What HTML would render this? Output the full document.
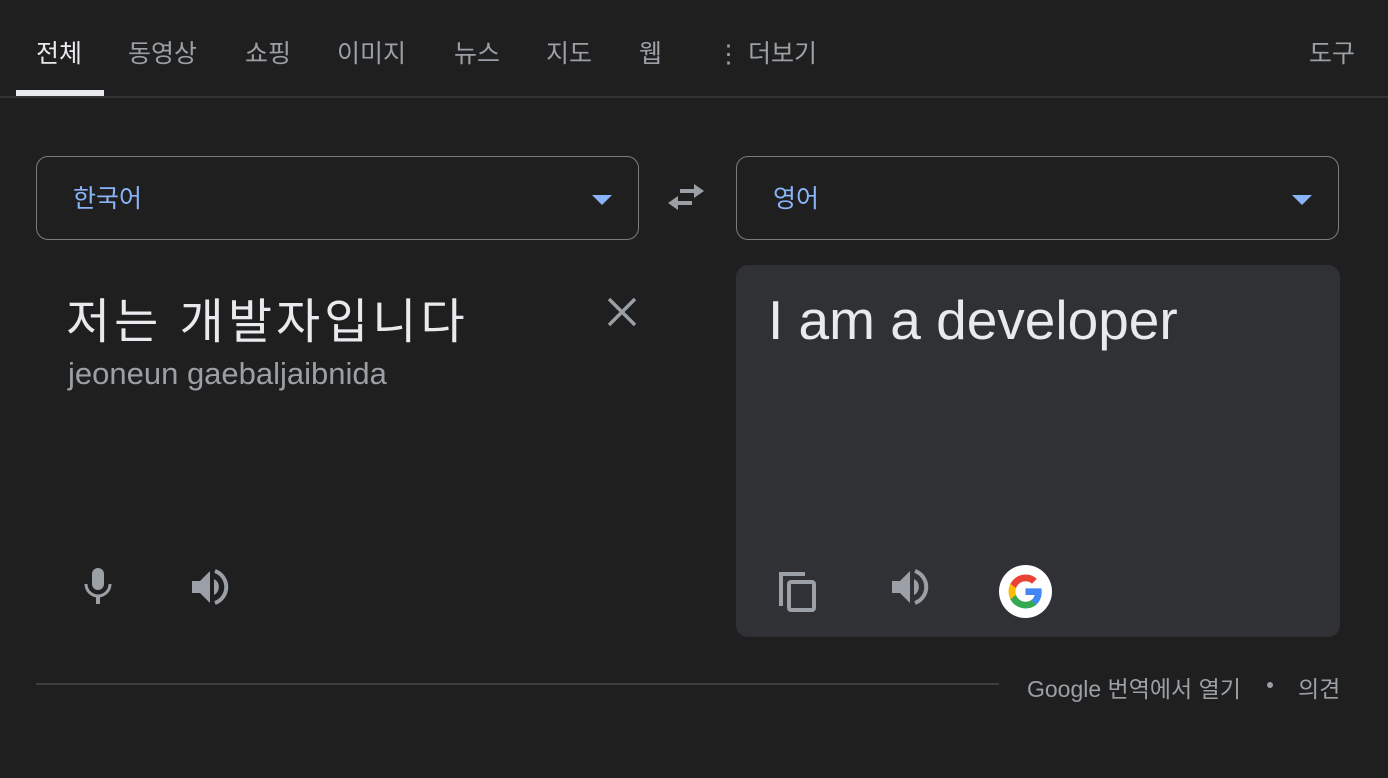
<!DOCTYPE html>
<html><head><meta charset="utf-8"><style>
*{margin:0;padding:0;box-sizing:border-box}
body{width:1388px;height:778px;background:#1f1f1f;font-family:"Liberation Sans","Noto Sans CJK KR",sans-serif;position:relative;overflow:hidden;color:#bdc1c6}
.a{position:absolute;white-space:nowrap}
.tab{font-size:25px;color:#9aa0a6;top:34px}
.sel{position:absolute;top:156px;width:603px;height:84px;border:1.5px solid #7a7d80;border-radius:12px}
.sel span{position:absolute;left:36px;top:22px;font-size:25px;color:#8ab4f8}
.sel i{position:absolute;right:26px;top:38px;border-left:10px solid transparent;border-right:10px solid transparent;border-top:10px solid #8ab4f8}
</style></head><body>
<div class="a tab" style="left:36px;color:#e8eaed">전체</div>
<div class="a tab" style="left:128px">동영상</div>
<div class="a tab" style="left:245px">쇼핑</div>
<div class="a tab" style="left:337px">이미지</div>
<div class="a tab" style="left:454px">뉴스</div>
<div class="a tab" style="left:546px">지도</div>
<div class="a tab" style="left:639px">웹</div>
<div class="a tab" style="left:716px">⋮ 더보기</div>
<div class="a tab" style="left:1309px">도구</div>
<div class="a" style="left:16px;top:90px;width:88px;height:6px;background:#e8eaed"></div>
<div class="a" style="left:0;top:96px;width:1388px;height:2px;background:#333"></div>

<div class="sel" style="left:36px"><span>한국어</span><i></i></div>
<div class="sel" style="left:736px"><span>영어</span><i></i></div>
<svg class="a" style="left:666px;top:182px" width="40" height="32" viewBox="0 0 40 32" fill="#9aa0a6"><path d="M28 2 L38 9 L28 16 V11 H14 V7 H28Z"/><path d="M12 14 L2 21 L12 28 V23 H26 V19 H12Z"/></svg>

<div class="a" style="left:66px;top:282px;font-size:48px;letter-spacing:4px;color:#e8eaed">저는 개발자입니다</div>
<div class="a" style="left:68px;top:356px;font-size:31px;color:#9aa0a6">jeoneun gaebaljaibnida</div>
<svg class="a" style="left:606px;top:296px" width="32" height="32" viewBox="0 0 32 32" stroke="#9aa0a6" stroke-width="3.5"><path d="M3 3L29 29M29 3L3 29"/></svg>
<svg class="a" style="left:80px;top:566px" width="36" height="40" viewBox="0 0 36 40" fill="#9aa0a6"><rect x="12" y="2" width="12" height="22" rx="6"/><path d="M6 18a12 12 0 0 0 24 0" stroke="#9aa0a6" stroke-width="3" fill="none"/><rect x="16" y="29" width="4" height="9"/></svg>
<svg class="a" style="left:190px;top:568px" width="40" height="38" viewBox="0 0 40 38" fill="#9aa0a6"><path d="M2 13H10L20 3V35L10 25H2Z"/><path d="M24 11a9 9 0 0 1 0 16Z"/><path d="M25 3a17 17 0 0 1 0 32" stroke="#9aa0a6" stroke-width="4" fill="none"/></svg>

<div class="a" style="left:736px;top:265px;width:604px;height:372px;background:#303134;border-radius:12px"></div>
<div class="a" style="left:768px;top:288px;font-size:55px;color:#e8eaed">I am a developer</div>
<svg class="a" style="left:778px;top:570px" width="40" height="44" viewBox="0 0 40 44" fill="none" stroke="#9aa0a6" stroke-width="4"><path d="M3 36V4H27"/><rect x="11" y="12" width="25" height="28" rx="2"/></svg>
<svg class="a" style="left:890px;top:568px" width="40" height="38" viewBox="0 0 40 38" fill="#9aa0a6"><path d="M2 13H10L20 3V35L10 25H2Z"/><path d="M24 11a9 9 0 0 1 0 16Z"/><path d="M25 3a17 17 0 0 1 0 32" stroke="#9aa0a6" stroke-width="4" fill="none"/></svg>
<div class="a" style="left:999px;top:565px;width:53px;height:53px;border-radius:50%;background:#fff"></div>
<svg class="a" style="left:1007px;top:573px" width="37" height="37" viewBox="0 0 48 48"><path fill="#4285F4" d="M45 24.5c0-1.6-.1-3.1-.4-4.5H24v8.5h11.8c-.5 2.7-2.1 5-4.4 6.6v5.5h7.1c4.2-3.8 6.5-9.5 6.5-16.1z"/><path fill="#34A853" d="M24 46c5.9 0 10.9-2 14.5-5.3l-7.1-5.5c-2 1.3-4.5 2.1-7.4 2.1-5.7 0-10.6-3.9-12.3-9H4.4v5.7C8 41.1 15.4 46 24 46z"/><path fill="#FBBC05" d="M11.7 28.3c-.4-1.3-.7-2.8-.7-4.3s.3-3 .7-4.3V14H4.4C2.9 17 2 20.4 2 24s.9 7 2.4 10z"/><path fill="#EA4335" d="M24 10.7c3.2 0 6.1 1.1 8.4 3.3l6.3-6.3C34.9 4.1 29.9 2 24 2 15.4 2 8 6.9 4.4 14l7.3 5.7c1.7-5.1 6.6-9 12.3-9z"/></svg>

<div class="a" style="left:36px;top:683px;width:963px;height:2px;background:#3c4043"></div>
<div class="a" style="left:1027px;top:670px;font-size:23px;color:#9aa0a6">Google 번역에서 열기</div>
<div class="a" style="left:1267px;top:682px;width:6px;height:6px;border-radius:50%;background:#9aa0a6"></div>
<div class="a" style="left:1298px;top:670px;font-size:23px;color:#9aa0a6">의견</div>
</body></html>
